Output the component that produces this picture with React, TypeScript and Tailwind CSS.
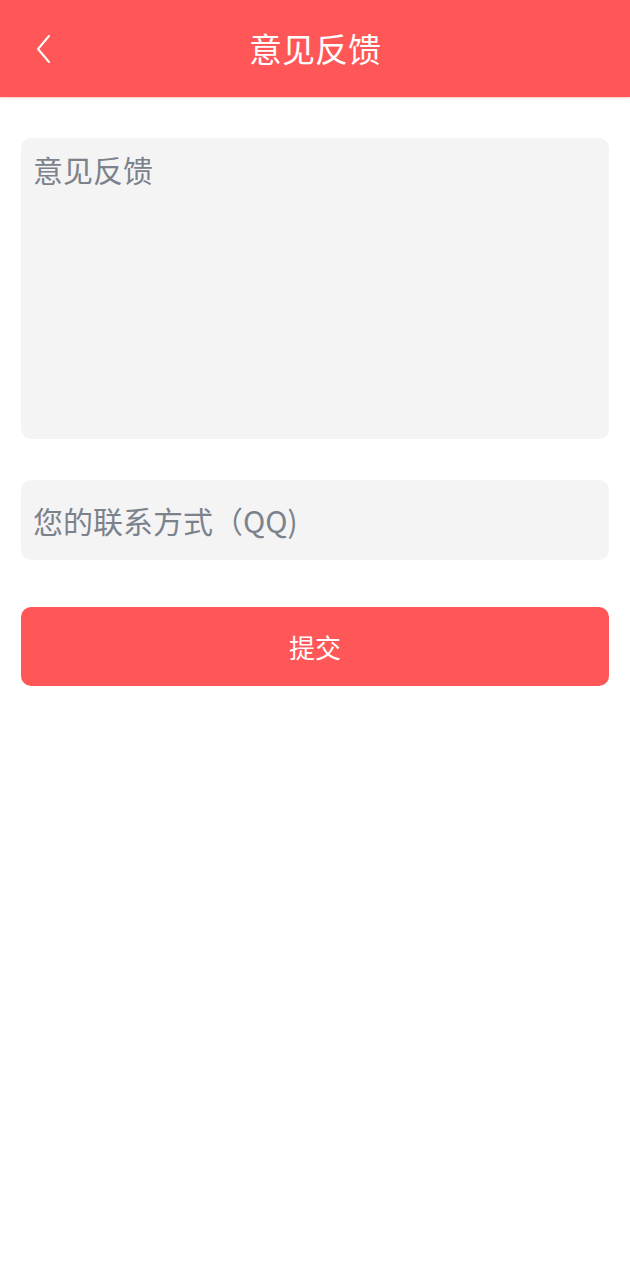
import React from "react";

export default function App() {
  return (
    <div
      className="min-h-[1280px] w-[630px] bg-white"
      style={{ fontFamily: '"Noto Sans CJK SC", "Noto Sans", sans-serif' }}
    >
      <header className="relative flex h-[97px] items-center justify-center bg-[#ff5757] shadow-[0_1px_2px_rgba(255,87,87,0.35)]">
        <button className="absolute left-[30px] top-[31px] flex h-[36px] w-[26px] items-center justify-center">
          <svg width="18" height="30" viewBox="0 0 18 30" fill="none">
            <path d="M15 2 L4 15 L15 28" stroke="#fff" strokeWidth="2" strokeLinecap="round" strokeLinejoin="round" />
          </svg>
        </button>
        <h1 className="text-[33px] font-normal leading-none text-white">意见反馈</h1>
      </header>

      <main className="flex flex-col px-[21px] pt-[41px]">
        <div className="h-[301px] rounded-[10px] bg-[#f4f4f5] px-[12px] pt-[11px]">
          <span className="text-[30px] leading-[40px] text-[#7c828c]">意见反馈</span>
        </div>
        <div className="mt-[41px] flex h-[80px] items-center rounded-[10px] bg-[#f4f4f5] px-[12px]">
          <span className="text-[30px] leading-none text-[#7c828c]">您的联系方式（QQ)</span>
        </div>
        <button className="mt-[47px] flex h-[79px] items-center justify-center rounded-[10px] bg-[#ff5757]">
          <span className="text-[26px] leading-none text-white">提交</span>
        </button>
      </main>
    </div>
  );
}
